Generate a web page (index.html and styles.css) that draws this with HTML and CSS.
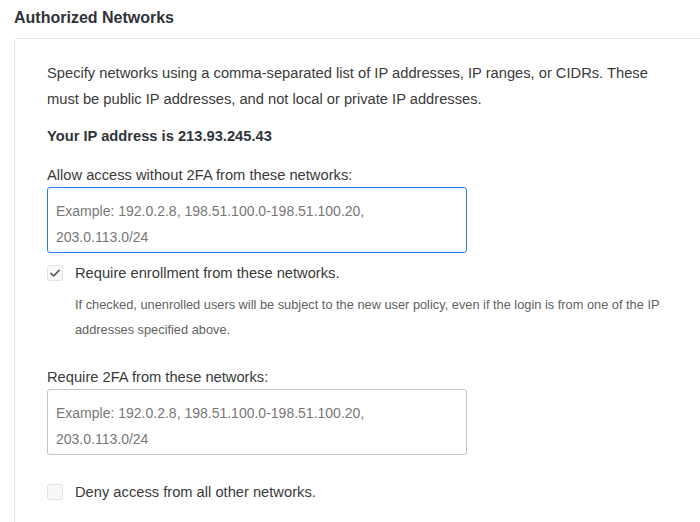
FILE: index.html
```html
<!DOCTYPE html>
<html lang="en">
<head>
<meta charset="UTF-8">
<meta name="viewport" content="width=device-width, initial-scale=1.0">
<title>Authorized Networks</title>
<link rel="stylesheet" href="styles.css">
</head>
<body>

<h2 class="section-title">Authorized Networks</h2>

<div class="panel">
    <p class="intro">Specify networks using a comma-separated list of IP addresses, IP ranges, or CIDRs. These must be public IP addresses, and not local or private IP addresses.</p>

    <p class="your-ip">Your IP address is 213.93.245.43</p>

    <label class="field-label" for="allowNetworks">Allow access without 2FA from these networks:</label>
    <textarea id="allowNetworks" class="networks focused" placeholder="Example: 192.0.2.8, 198.51.100.0-198.51.100.20,&#10;203.0.113.0/24"></textarea>

    <div class="check-row first-check">
        <span class="checkbox">
            <svg width="12" height="12" viewBox="0 0 12 12"><path d="M2 6.4 L4.7 9 L10 3.4" fill="none" stroke="#555" stroke-width="1.6" stroke-linecap="round" stroke-linejoin="round"/></svg>
        </span>
        <span class="check-label">Require enrollment from these networks.</span>
    </div>
    <p class="help">If checked, unenrolled users will be subject to the new user policy, even if the login is from one of the IP addresses specified above.</p>

    <label class="field-label second" for="requireNetworks">Require 2FA from these networks:</label>
    <textarea id="requireNetworks" class="networks" placeholder="Example: 192.0.2.8, 198.51.100.0-198.51.100.20,&#10;203.0.113.0/24"></textarea>

    <div class="check-row last-check">
        <span class="checkbox"></span>
        <span class="check-label">Deny access from all other networks.</span>
    </div>
</div>

</body>
</html>
```

FILE: styles.css
```css
body {
    font-family: "Liberation Sans", Arial, sans-serif;
    margin: 0;
    padding: 0;
    background-color: #fff;
    color: #3a3a3a;
    overflow: hidden;
}
.section-title {
    margin: 0;
    padding: 8px 0 0 14px;
    font-size: 16px;
    line-height: 20px;
    color: #2f3439;
}
.panel {
    margin: 10px 0 0 14px;
    padding: 21px 0 30px 32px;
    border: 1px solid #e6eaed;
    border-right: none;
    border-radius: 4px 0 0 0;
}
.intro {
    margin: 0;
    width: 615px;
    font-size: 14.7px;
    line-height: 26px;
}
.your-ip {
    margin: 11px 0 0;
    font-size: 14.7px;
    line-height: 26px;
    font-weight: bold;
    color: #2f3439;
}
.field-label {
    display: block;
    margin-top: 14px;
    font-size: 14.7px;
    line-height: 24px;
}
.field-label.second {
    margin-top: 23px;
}
.networks {
    display: block;
    width: 420px;
    height: 66px;
    box-sizing: border-box;
    padding: 10px 8px 0;
    margin: 0;
    border: 1px solid #c4c4c4;
    border-radius: 3px;
    font-family: "Liberation Sans", Arial, sans-serif;
    font-size: 14px;
    line-height: 26px;
    resize: none;
    outline: none;
    overflow: hidden;
}
.networks.focused {
    border-color: #2e7be3;
}
.networks::placeholder {
    color: #777;
}
.check-row {
    display: flex;
    align-items: center;
    gap: 12px;
    font-size: 14.7px;
    line-height: 24px;
}
.first-check {
    margin-top: 8px;
}
.last-check {
    margin-top: 25px;
}
.checkbox {
    display: flex;
    align-items: center;
    justify-content: center;
    width: 16px;
    height: 16px;
    box-sizing: border-box;
    border: 1px solid #e2e2e2;
    border-radius: 3px;
    background-color: #f8f8f8;
}
.help {
    margin: 7px 0 0 28px;
    width: 610px;
    font-size: 12.8px;
    line-height: 25px;
    color: #5f5f5f;
}
```
